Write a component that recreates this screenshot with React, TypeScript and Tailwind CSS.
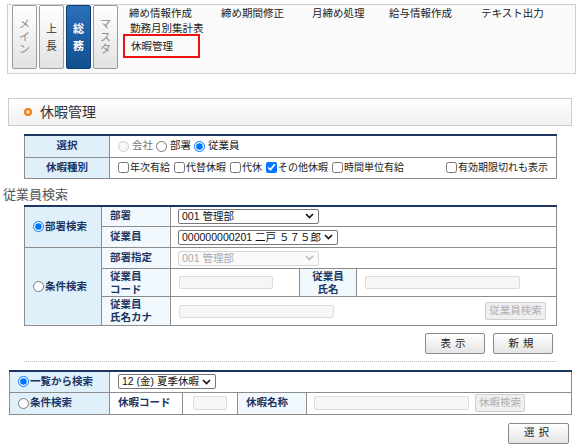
import React from "react";
import clsx from "clsx";

function Chevron({ light }: { light?: boolean }) {
  return (
    <svg width="9" height="6" viewBox="0 0 9 6" className="shrink-0">
      <path
        d="M1 1l3.5 3.5L8 1"
        fill="none"
        stroke={light ? "#bbb" : "#111"}
        strokeWidth="1.6"
      />
    </svg>
  );
}

function FakeSelect({
  value,
  className,
  disabled,
}: {
  value: string;
  className?: string;
  disabled?: boolean;
}) {
  return (
    <div
      className={clsx(
        "flex items-center justify-between gap-[3px] h-[15px] pl-[3px] pr-[4px] border rounded-[2px] text-[10.5px] leading-[13px] whitespace-nowrap",
        disabled ? "border-[#d6d6d6] text-[#aaa] bg-[#fafafa]" : "border-[#777] text-[#111] bg-white",
        className
      )}
    >
      <span>{value}</span>
      <Chevron light={disabled} />
    </div>
  );
}

function TextBox({ className }: { className?: string }) {
  return <div className={clsx("h-[13px] border border-[#dcdcdc] rounded-[2px] bg-[#f6f6f6]", className)} />;
}

function Radio({ checked, disabled }: { checked?: boolean; disabled?: boolean }) {
  return (
    <input
      type="radio"
      readOnly
      checked={checked}
      disabled={disabled}
      className="w-[11px] h-[11px] m-0 shrink-0"
    />
  );
}

function Check({ checked }: { checked?: boolean }) {
  return <input type="checkbox" readOnly checked={checked} className="w-[11px] h-[11px] m-0 shrink-0" />;
}

function Tab({ label, active, dim }: { label: string; active?: boolean; dim?: boolean }) {
  const chars = label.split("");
  return (
    <div
      className={clsx(
        "w-[25px] h-[64px] flex flex-col items-center justify-center border rounded-[2px] text-[11px]",
        chars.length === 2 ? "gap-[5px] leading-[12px]" : "leading-[12.5px]",
        active
          ? "bg-linear-to-b from-[#2a6fb8] to-[#11508f] border-[#0d3f75] text-white font-bold"
          : "bg-linear-to-b from-white to-[#e2e2e2] border-[#9c9c9c]",
        !active && (dim ? "text-[#8a8a8a]" : "text-[#333]")
      )}
    >
      {chars.map((c, i) => (
        <span key={i}>{c}</span>
      ))}
    </div>
  );
}

function Btn({ label, className, disabled }: { label: string; className?: string; disabled?: boolean }) {
  return (
    <div
      className={clsx(
        "flex items-center justify-center border rounded-[2px] text-[10.5px]",
        disabled
          ? "border-[#d0d0d0] bg-[#efefef] text-[#b0b0b0]"
          : "border-[#8a8a8a] bg-linear-to-b from-white to-[#e4e4e4] text-[#222] tracking-[4px]",
        className
      )}
    >
      {label}
    </div>
  );
}

const th = "bg-[#dff0fb] text-[#1d3563] font-bold border border-[#8c8c8c]";
const th2 = "bg-[#f2f9fe] text-[#1d3563] font-bold border border-[#8c8c8c]";
const td = "bg-white border border-[#8c8c8c]";

export default function App() {
  return (
    <div className="w-[581px] h-[444px] bg-white text-[10.5px] text-[#222] font-['Liberation_Sans','Noto_Sans_CJK_JP',sans-serif] overflow-hidden">
      {/* top menu */}
      <div className="ml-[7px] mt-[4px] w-[569px] h-[70px] border border-[#cfcfcf] bg-[#fafafa] flex">
        <div className="flex gap-[2px] pl-[4px]">
          <Tab label="メイン" dim />
          <Tab label="上長" />
          <Tab label="総務" active />
          <Tab label="マスタ" dim />
        </div>
        <div className="ml-[11px] pt-[1px] flex flex-col leading-[14px] text-[#222]">
          <div className="flex h-[15px]">
            <span className="w-[92px]">締め情報作成</span>
            <span className="w-[91px]">締め期間修正</span>
            <span className="w-[77px]">月締め処理</span>
            <span className="w-[92px]">給与情報作成</span>
            <span>テキスト出力</span>
          </div>
          <div className="h-[13px] pl-[1px]">勤務月別集計表</div>
          <div className="ml-[-6px] w-[77px] h-[24px] border-2 border-[#ee1111] flex items-center pl-[6px]">
            休暇管理
          </div>
        </div>
      </div>

      {/* title bar */}
      <div className="ml-[8px] mt-[24px] w-[564px] h-[28px] border border-[#cccccc] bg-linear-to-b from-white to-[#f1f1f1] flex items-center pl-[15px] gap-[8px]">
        <span className="w-[8px] h-[8px] rounded-full border-2 border-[#ef7a1a] bg-[#fbd3a8]" />
        <span className="text-[14px] text-[#333] leading-none">休暇管理</span>
      </div>

      {/* selection table */}
      <table className="ml-[24px] mt-[8px] w-[533px] border-collapse table-fixed">
        <colgroup>
          <col className="w-[85px]" />
          <col />
        </colgroup>
        <tbody>
          <tr className="h-[22px]">
            <td className={clsx(th, "text-center border-t-[#1d3563] border-t-2")}>選択</td>
            <td className={clsx(td, "pl-[8px] border-t-[#1d3563] border-t-2")}>
              <div className="flex items-center gap-[3px]">
                <Radio disabled />
                <span className="text-[#777]">会社</span>
                <Radio />
                <span>部署</span>
                <Radio checked />
                <span>従業員</span>
              </div>
            </td>
          </tr>
          <tr className="h-[21px]">
            <td className={clsx(th, "text-center")}>休暇種別</td>
            <td className={clsx(td, "pl-[8px] pr-[8px]")}>
              <div className="flex items-center gap-[1px] text-[10px]">
                <Check />
                <span className="mr-[3px]">年次有給</span>
                <Check />
                <span className="mr-[3px]">代替休暇</span>
                <Check />
                <span className="mr-[3px]">代休</span>
                <Check checked />
                <span className="mr-[3px]">その他休暇</span>
                <Check />
                <span>時間単位有給</span>
                <span className="flex-1" />
                <Check />
                <span>有効期限切れも表示</span>
              </div>
            </td>
          </tr>
        </tbody>
      </table>

      {/* employee search */}
      <div className="ml-[3px] mt-[8px] text-[13px] leading-[16px] text-[#555]">従業員検索</div>
      <table className="ml-[24px] mt-[2px] w-[533px] border-collapse table-fixed">
        <colgroup>
          <col className="w-[77px]" />
          <col className="w-[69px]" />
          <col className="w-[129px]" />
          <col className="w-[57px]" />
          <col />
        </colgroup>
        <tbody>
          <tr className="h-[21px]">
            <td rowSpan={2} className={clsx(th, "pl-[8px] border-t-2 border-t-[#1d3563]")}>
              <div className="flex items-center gap-[1px]">
                <Radio checked />
                <span>部署検索</span>
              </div>
            </td>
            <td className={clsx(th2, "pl-[8px] border-t-2 border-t-[#1d3563]")}>部署</td>
            <td colSpan={3} className={clsx(td, "pl-[7px] border-t-2 border-t-[#1d3563]")}>
              <FakeSelect value="001 管理部" className="w-[141px]" />
            </td>
          </tr>
          <tr className="h-[21px]">
            <td className={clsx(th2, "pl-[8px]")}>従業員</td>
            <td colSpan={3} className={clsx(td, "pl-[7px]")}>
              <FakeSelect value="000000000201 二戸 ５７５郎" className="w-fit min-w-[154px]" />
            </td>
          </tr>
          <tr className="h-[21px]">
            <td rowSpan={3} className={clsx(th, "pl-[8px]")}>
              <div className="flex items-center gap-[1px]">
                <Radio />
                <span>条件検索</span>
              </div>
            </td>
            <td className={clsx(th2, "pl-[8px]")}>部署指定</td>
            <td colSpan={3} className={clsx(td, "pl-[7px]")}>
              <FakeSelect value="001 管理部" className="w-[141px]" disabled />
            </td>
          </tr>
          <tr className="h-[28px]">
            <td className={clsx(th2, "pl-[8px] leading-[13px]")}>
              従業員
              <br />
              コード
            </td>
            <td className={clsx(td, "pl-[8px]")}>
              <TextBox className="w-[94px]" />
            </td>
            <td className={clsx(th2, "text-center leading-[13px]")}>
              従業員
              <br />
              氏名
            </td>
            <td className={clsx(td, "pl-[8px]")}>
              <TextBox className="w-[155px]" />
            </td>
          </tr>
          <tr className="h-[29px]">
            <td className={clsx(th2, "pl-[8px] leading-[13px]")}>
              従業員
              <br />
              氏名カナ
            </td>
            <td colSpan={3} className={clsx(td, "pl-[8px] pr-[10px]")}>
              <div className="flex items-center justify-between">
                <TextBox className="w-[155px]" />
                <Btn label="従業員検索" disabled className="w-[61px] h-[18px]" />
              </div>
            </td>
          </tr>
        </tbody>
      </table>

      <div className="flex justify-end gap-[8px] w-[553px] mt-[7px]">
        <Btn label="表示" className="w-[60px] h-[21px]" />
        <Btn label="新規" className="w-[60px] h-[21px]" />
      </div>

      <div className="ml-[24px] mt-[7px] w-[533px] border-t border-dotted border-[#bdbdbd]" />

      {/* holiday search */}
      <table className="ml-[9px] mt-[8px] w-[563px] border-collapse table-fixed">
        <colgroup>
          <col className="w-[100px]" />
          <col className="w-[73px]" />
          <col className="w-[55px]" />
          <col className="w-[69px]" />
          <col />
        </colgroup>
        <tbody>
          <tr className="h-[21px]">
            <td className={clsx(th, "pl-[8px] border-t-2 border-t-[#1d3563]")}>
              <div className="flex items-center gap-[1px]">
                <Radio checked />
                <span>一覧から検索</span>
              </div>
            </td>
            <td colSpan={4} className={clsx(td, "pl-[8px] border-t-2 border-t-[#1d3563]")}>
              <FakeSelect value="12 (金) 夏季休暇" className="w-fit min-w-[92px]" />
            </td>
          </tr>
          <tr className="h-[22px]">
            <td className={clsx(th, "pl-[8px]")}>
              <div className="flex items-center gap-[1px]">
                <Radio />
                <span>条件検索</span>
              </div>
            </td>
            <td className={clsx(td, "pl-[8px] text-[#1d3563] font-bold")}>休暇コード</td>
            <td className={clsx(td, "pl-[10px]")}>
              <TextBox className="w-[34px] h-[14px]" />
            </td>
            <td className={clsx(th2, "pl-[8px]")}>休暇名称</td>
            <td className={clsx(td, "pl-[7px]")}>
              <div className="flex items-center gap-[6px]">
                <TextBox className="w-[155px] h-[14px]" />
                <Btn label="休暇検索" disabled className="w-[50px] h-[18px]" />
              </div>
            </td>
          </tr>
        </tbody>
      </table>

      <div className="flex justify-end w-[569px] mt-[8px]">
        <Btn label="選択" className="w-[61px] h-[21px]" />
      </div>
    </div>
  );
}
